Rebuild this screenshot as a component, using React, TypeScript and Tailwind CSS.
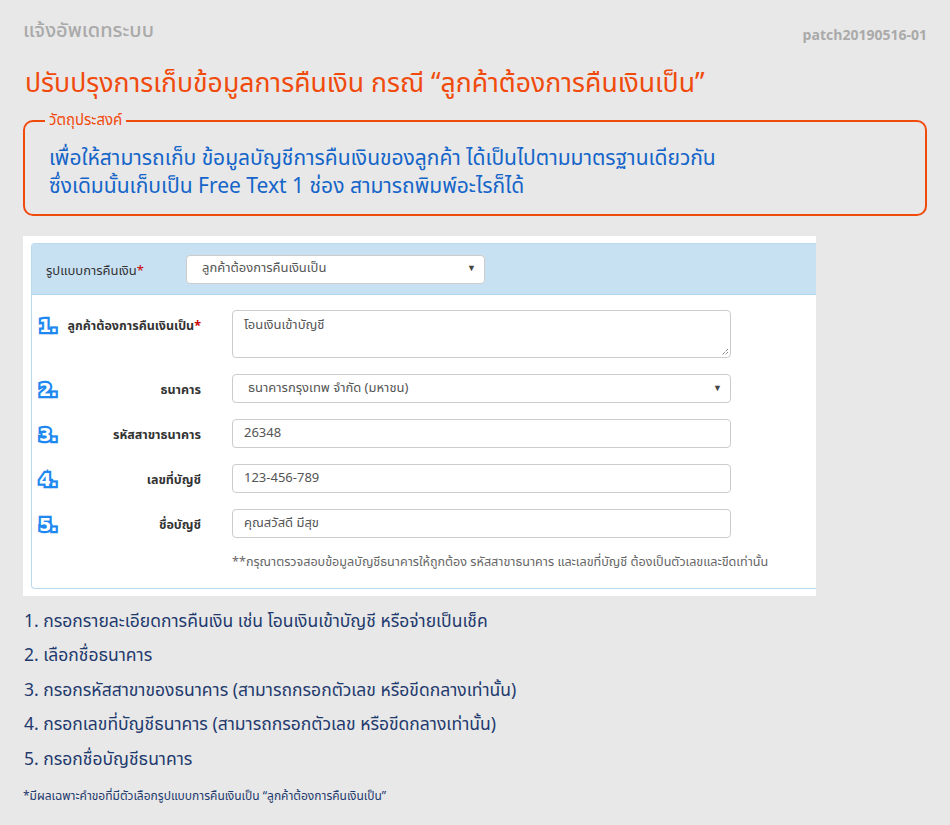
import React from "react";

const thai = "font-['Noto_Sans_Thai','Noto_Sans','Liberation_Sans',sans-serif]";

function StepNo({ n }: { n: number }) {
  return (
    <span className="w-[30px] shrink-0 pl-[3px] text-[18px] leading-none font-bold tracking-[-1px] text-white [paint-order:stroke_fill] [-webkit-text-stroke:4.5px_#1e88f0] font-['DejaVu_Sans',sans-serif]">
      {n}.
    </span>
  );
}

function FormRow({ n, label, children, star }: { n: number; label: string; children: React.ReactNode; star?: boolean }) {
  return (
    <div className="flex items-start">
      <div className="flex w-[165px] items-center pt-[6px]">
        <StepNo n={n} />
        <div className="flex-1 whitespace-nowrap pt-[2px] text-right text-[12.5px] font-bold text-[#333]">
          {label}
          {star && <span className="text-[#c00]">*</span>}
        </div>
      </div>
      <div className="ml-[31px] w-[499px]">{children}</div>
    </div>
  );
}

function Input({ value }: { value: string }) {
  return (
    <div className="flex h-[29px] items-center rounded-[4px] border border-[#ccc] bg-white px-[11px] text-[13px] text-[#555]">
      {value}
    </div>
  );
}

function Select({ value, className }: { value: string; className?: string }) {
  return (
    <div className={`flex h-[29px] items-center justify-between rounded-[4px] border border-[#ccc] bg-white pl-[15px] pr-[8px] text-[13px] text-[#555] ${className ?? ""}`}>
      <span>{value}</span>
      <span className="text-[9px] text-[#444]">▼</span>
    </div>
  );
}

const steps = [
  "1. กรอกรายละเอียดการคืนเงิน เช่น โอนเงินเข้าบัญชี หรือจ่ายเป็นเช็ค",
  "2. เลือกชื่อธนาคาร",
  "3. กรอกรหัสสาขาของธนาคาร (สามารถกรอกตัวเลข หรือขีดกลางเท่านั้น)",
  "4. กรอกเลขที่บัญชีธนาคาร (สามารถกรอกตัวเลข หรือขีดกลางเท่านั้น)",
  "5. กรอกชื่อบัญชีธนาคาร",
];

export default function App() {
  return (
    <div className={`min-h-[825px] w-full bg-[#e8e8e8] px-[23px] pt-[16px] pb-[20px] ${thai}`}>
      {/* header */}
      <div className="flex items-center justify-between">
        <div className="text-[20px] font-medium text-[#aaaaaa]">แจ้งอัพเดทระบบ</div>
        <div className="pt-[8px] text-[14px] font-bold text-[#aaaaaa]">patch20190516-01</div>
      </div>

      <h1 className="mt-[20px] ml-[2px] text-[26.6px] leading-[36px] text-[#f04a0c]">
        ปรับปรุงการเก็บข้อมูลการคืนเงิน กรณี “ลูกค้าต้องการคืนเงินเป็น”
      </h1>

      {/* objective box */}
      <fieldset className="mt-[10px] rounded-[10px] border-2 border-[#f04a0c] pl-[24px] pr-[16px] pb-[13px]">
        <legend className="ml-[-4px] px-[4px] text-[15px] leading-[18px] text-[#f04a0c]">วัตถุประสงค์</legend>
        <div className="mt-[15px] text-[21px] leading-[28px] text-[#1565c8]">
          <div>เพื่อให้สามารถเก็บ ข้อมูลบัญชีการคืนเงินของลูกค้า ได้เป็นไปตามมาตรฐานเดียวกัน</div>
          <div>ซึ่งเดิมนั้นเก็บเป็น Free Text 1 ช่อง สามารถพิมพ์อะไรก็ได้</div>
        </div>
      </fieldset>

      {/* screenshot of the form */}
      <div className="mt-[20px] w-[793px] overflow-hidden bg-white pt-[7px] pb-[7px] pl-[8px]">
        <div className="rounded-l-[4px] border border-r-0 border-[#b9daf0]">
          <div className="flex h-[51px] items-center border-b border-[#aed4ee] bg-[#c7e1f3] pl-[14px]">
            <div className="w-[140px] pt-[6px] text-[13px] text-[#333]">
              รูปแบบการคืนเงิน<span className="text-[#c00]">*</span>
            </div>
            <Select value="ลูกค้าต้องการคืนเงินเป็น" className="w-[299px]" />
          </div>
          <div className="flex flex-col gap-[16px] pt-[15px] pl-[4px] pb-[15px]">
            <FormRow n={1} label="ลูกค้าต้องการคืนเงินเป็น" star>
              <div className="relative h-[48px] rounded-[4px] border border-[#ccc] bg-white px-[11px] pt-[5px] text-[13px] text-[#555]">
                โอนเงินเข้าบัญชี
                <svg className="absolute right-[1px] bottom-[1px]" width="9" height="9" viewBox="0 0 9 9">
                  <path d="M8 2 L2 8 M8 5 L5 8" stroke="#555" strokeWidth="1" strokeDasharray="1 1" />
                </svg>
              </div>
            </FormRow>
            <FormRow n={2} label="ธนาคาร">
              <Select value="ธนาคารกรุงเทพ จำกัด (มหาชน)" />
            </FormRow>
            <FormRow n={3} label="รหัสสาขาธนาคาร">
              <Input value="26348" />
            </FormRow>
            <FormRow n={4} label="เลขที่บัญชี">
              <Input value="123-456-789" />
            </FormRow>
            <FormRow n={5} label="ชื่อบัญชี">
              <Input value="คุณสวัสดี มีสุข" />
            </FormRow>
            <div className="ml-[196px] whitespace-nowrap text-[12.6px] text-[#666]">
              **กรุณาตรวจสอบข้อมูลบัญชีธนาคารให้ถูกต้อง รหัสสาขาธนาคาร และเลขที่บัญชี ต้องเป็นตัวเลขและขีดเท่านั้น
            </div>
          </div>
        </div>
      </div>

      {/* steps */}
      <div className="mt-[14px] ml-[1px] flex flex-col gap-[10px] text-[17.5px] leading-[24.5px] text-[#1f3a6d]">
        {steps.map((s) => (
          <div key={s}>{s}</div>
        ))}
      </div>
      <div className="mt-[15px] text-[12px] text-[#1f3a6d]">
        *มีผลเฉพาะคำขอที่มีตัวเลือกรูปแบบการคืนเงินเป็น “ลูกค้าต้องการคืนเงินเป็น”
      </div>
    </div>
  );
}
